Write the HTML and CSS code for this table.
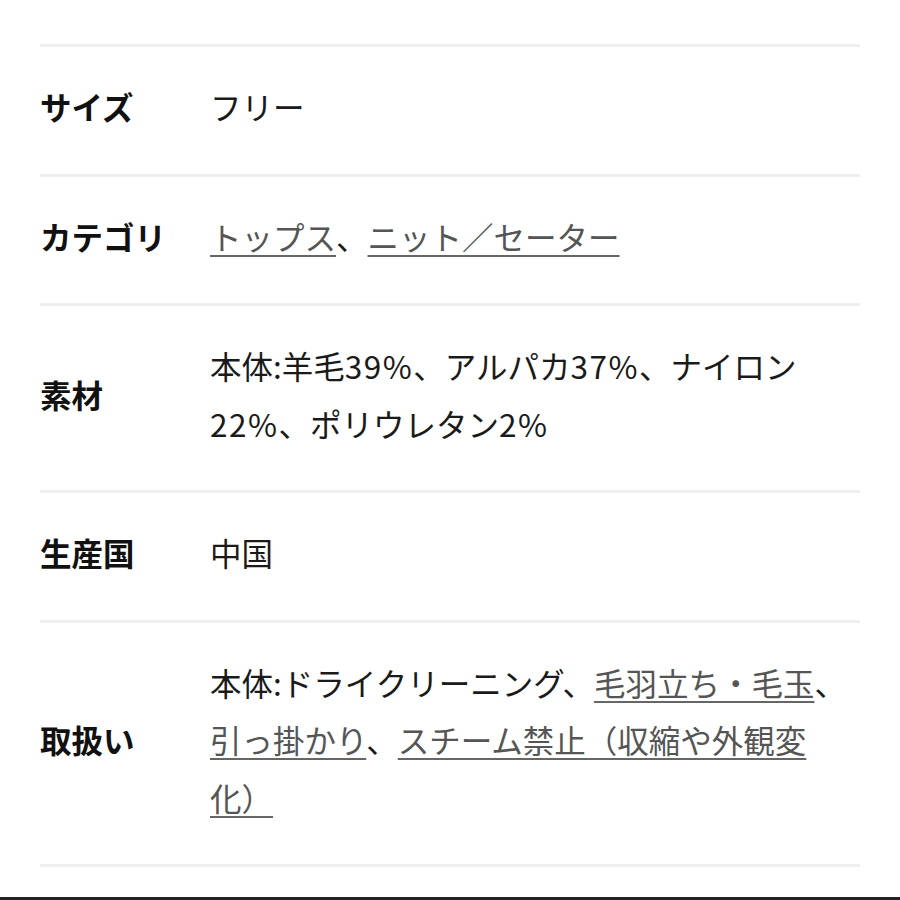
FILE: index.html
```html
<!DOCTYPE html>
<html lang="ja">
<head>
<meta charset="utf-8">
<title>商品詳細</title>
<link rel="stylesheet" href="styles.css">
</head>
<body>
<div class="spec">
  <div class="row">
    <div class="label">サイズ</div>
    <div class="value">フリー</div>
  </div>
  <div class="row">
    <div class="label">カテゴリ</div>
    <div class="value"><a class="link" href="#">トップス</a>、<a class="link" href="#">ニット／セーター</a></div>
  </div>
  <div class="row">
    <div class="label">素材</div>
    <div class="value">本体:羊毛<span class="num">39%</span>、アルパカ<span class="num">37%</span>、ナイロン<br><span class="num">22%</span>、ポリウレタン<span class="num">2%</span></div>
  </div>
  <div class="row">
    <div class="label">生産国</div>
    <div class="value">中国</div>
  </div>
  <div class="row">
    <div class="label">取扱い</div>
    <div class="value">本体:ドライクリーニング、<a class="link" href="#">毛羽立ち・毛玉</a>、<br><a class="link" href="#">引っ掛かり</a>、<a class="link" href="#">スチーム禁止（収縮や外観変<br>化）</a></div>
  </div>
</div>
<div class="bottom-bar"></div>
</body>
</html>
```

FILE: styles.css
```css
html, body {
  margin: 0;
  padding: 0;
  background: #ffffff;
}

body {
  font-family: "Noto Sans CJK JP", "Noto Sans", sans-serif;
  color: #1a1a1a;
  width: 900px;
  height: 900px;
  overflow: hidden;
  display: flex;
  flex-direction: column;
}

.spec {
  padding: 44px 40px 0;
  display: flex;
  flex-direction: column;
}

.row {
  display: flex;
  align-items: center;
  border-top: 3px solid #efefef;
  padding: 31px 0 38px;
}

.row:last-child {
  border-bottom: 3px solid #efefef;
}

.label {
  width: 170px;
  flex: none;
  font-size: 31.5px;
  font-weight: 700;
  line-height: 57.5px;
  color: #111111;
}

.value {
  flex: 1;
  font-size: 31.5px;
  font-weight: 400;
  line-height: 57.5px;
  color: #1a1a1a;
  white-space: nowrap;
}

.num {
  letter-spacing: 1.5px;
}

.link {
  color: #555555;
  text-decoration: underline;
  text-decoration-color: #666666;
  text-decoration-thickness: 2px;
  text-underline-offset: 5px;
}

.bottom-bar {
  margin-top: auto;
  height: 3px;
  background: #222222;
}
```
